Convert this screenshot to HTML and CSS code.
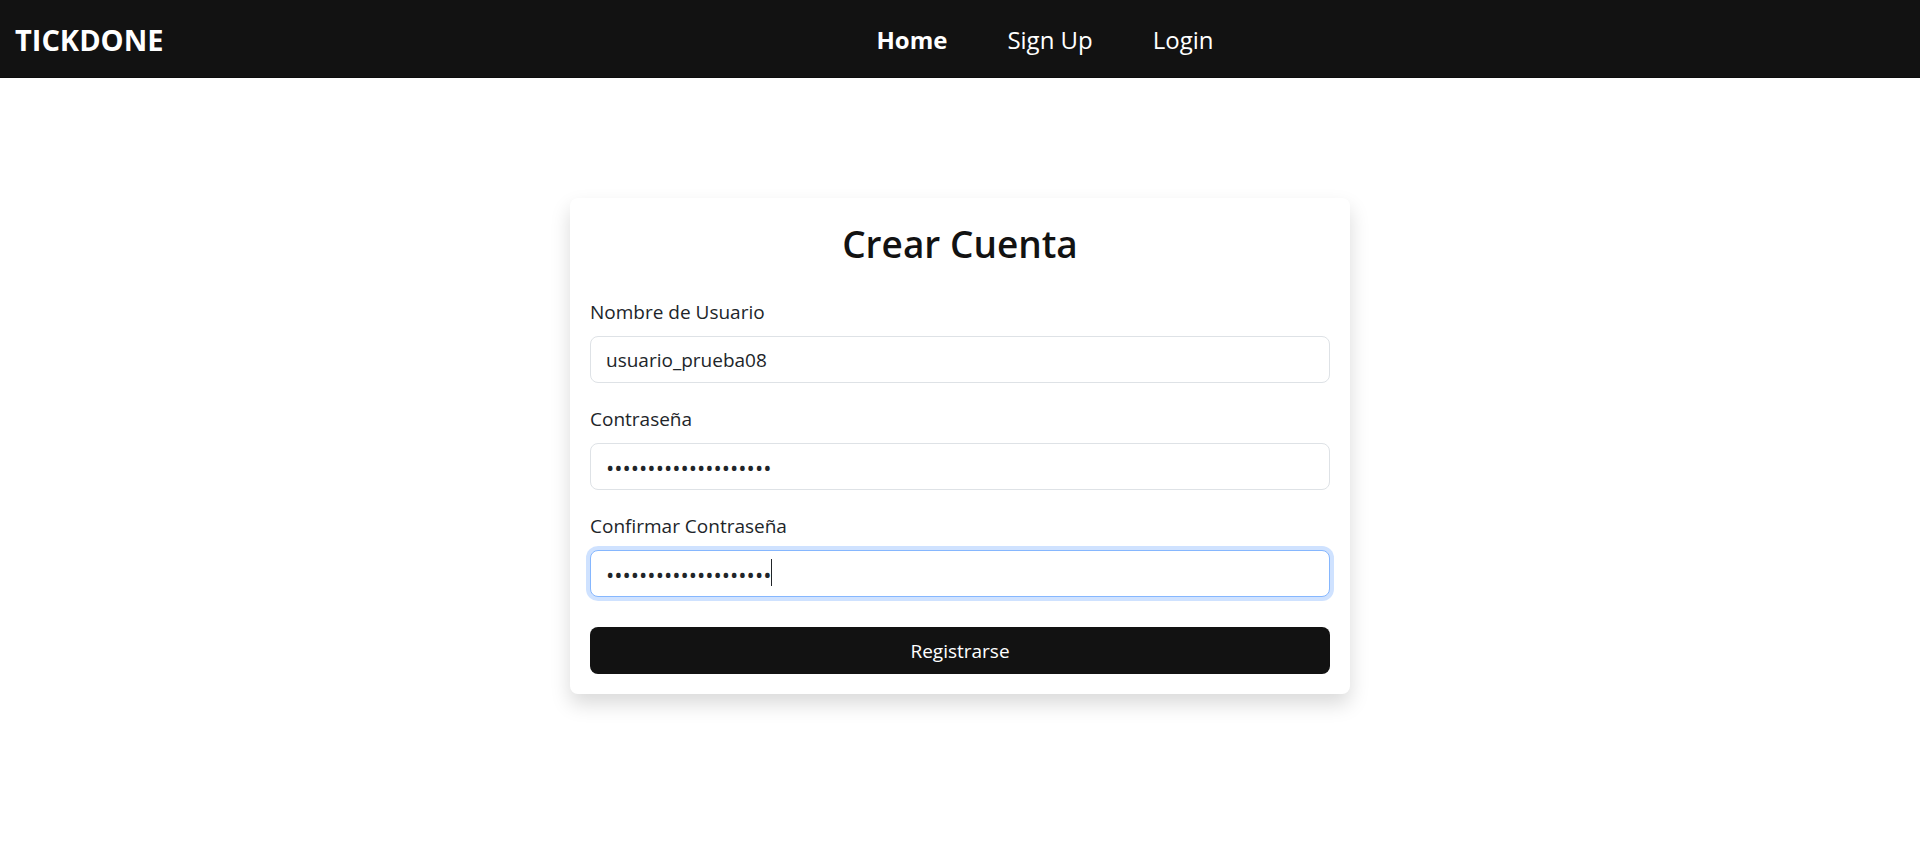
FILE: index.html
```html
<!DOCTYPE html>
<html lang="es">
<head>
<meta charset="utf-8">
<title>TICKDONE</title>
<link rel="stylesheet" href="styles.css">
</head>
<body>
<header class="navbar">
  <a class="brand" href="#">TICKDONE</a>
  <nav class="nav">
    <a class="nav-link active" href="#">Home</a>
    <a class="nav-link" href="#">Sign Up</a>
    <a class="nav-link" href="#">Login</a>
  </nav>
</header>
<main class="page">
  <form class="card">
    <h1 class="title">Crear Cuenta</h1>
    <div class="field">
      <label for="user">Nombre de Usuario</label>
      <input class="control" id="user" type="text" value="usuario_prueba08">
    </div>
    <div class="field">
      <label for="pass">Contraseña</label>
      <input class="control secret" id="pass" type="password" value="contrasena_prueba_08">
    </div>
    <div class="field">
      <label for="confirm">Confirmar Contraseña</label>
      <div class="control-wrap">
        <input class="control secret focused" id="confirm" type="password" value="contrasena_prueba_08">
        <span class="caret" aria-hidden="true"></span>
      </div>
    </div>
    <button class="submit" type="button">Registrarse</button>
  </form>
</main>
</body>
</html>
```
FILE: styles.css
```css
*, *::before, *::after { box-sizing: border-box; }
body {
  margin: 0;
  min-height: 100vh;
  display: flex;
  flex-direction: column;
  background: #fff;
  color: #212529;
  font: 19px/30px "Segoe UI", "Open Sans", "Noto Sans", sans-serif;
}
.navbar {
  display: grid;
  grid-template-columns: 1fr auto 1fr;
  align-items: center;
  padding: 18px 15px 15px;
  background: #121212;
  border-bottom: 1px solid #0c0c0c;
}
.brand { color: #fff; font-size: 29px; line-height: 44px; font-weight: 700; text-decoration: none; }
.nav { display: flex; gap: 60px; margin-left: 170px; }
.nav-link { color: #fff; font-size: 24px; line-height: 44px; text-decoration: none; }
.nav-link.active { font-weight: 700; }
.page { flex: 1; display: flex; align-items: flex-start; justify-content: center; padding-top: 120px; }
.card {
  width: 780px;
  max-width: 100%;
  padding: 20px;
  border-radius: 8px;
  background: #fff;
  box-shadow: 0 10px 20px rgba(0, 0, 0, .15);
}
.title { margin: 0 0 27px; color: #121212; font-size: 37px; line-height: 52px; font-weight: 600; text-align: center; }
.field { margin-bottom: 21px; }
.field label { display: block; margin-bottom: 9px; }
.control {
  display: block;
  width: 100%;
  height: 47px;
  padding: 8px 15px;
  border: 1px solid #dee2e6;
  border-radius: 8px;
  background: #fff;
  color: #212529;
  font: inherit;
  outline: 0;
}
.secret { font-size: 22px; }
.focused { border-color: #86b7fe; box-shadow: 0 0 0 4px rgba(13, 110, 253, .2); }
.control-wrap { position: relative; }
.caret { position: absolute; left: 181px; top: 9px; width: 1px; height: 27px; background: #212529; }
.submit {
  display: block;
  width: 100%;
  height: 47px;
  margin-top: 30px;
  border: 0;
  border-radius: 8px;
  background: #121212;
  color: #fff;
  font: inherit;
}
```
